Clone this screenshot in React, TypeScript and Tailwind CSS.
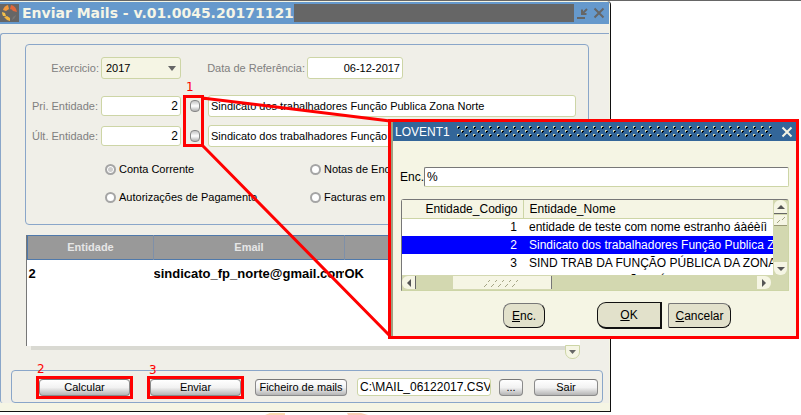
import React from 'react';

const font = { base: "font-['Liberation_Sans',Arial,sans-serif]" };

const lineInput = 'rounded-[3px] border border-[#cdd5a6] bg-white text-black outline-none min-w-0';
const glossy =
  'h-[17px] shrink-0 rounded-[4px] border border-[#8a8a8a] border-t-[#777] bg-linear-to-b from-white via-[#f2f2f2] to-[#b5b5b5] text-[11px] leading-[15px] text-black';
const marked = 'flex shrink-0 border-3 border-[#ff0000] bg-[#f0efe8]';
const lovButton = 'flex items-center justify-center bg-[#e2e1cb] text-xs leading-4 text-black border border-[#111]';

function Logo() {
  return (
    <svg className="h-[18px] w-[19px] shrink-0 bg-[#666]" viewBox="0 0 19 18" aria-hidden="true">
      <path d="M8 1 L9 5 L6 7 L3 6 Q4 2 8 1Z" fill="#f39a3e" />
      <path d="M11 1 Q16 2 17 8 L13 7 Q12 5 10 5Z" fill="#e2683c" />
      <path d="M2 8 L5 9 L6 12 L3 12 Q2 10 2 8Z" fill="#f4c04a" />
      <path d="M4 13 L7 12 L10 14 L10 17 Q6 16 4 13Z" fill="#f4b63e" />
      <path d="M13 13 L16 11 Q15 15 12 16Z" fill="#777" />
    </svg>
  );
}

function TitleBar() {
  return (
    <header className="flex h-[22px] items-center bg-[#6699cc]">
      <Logo />
      <h1 className="ml-[3px] shrink-0 whitespace-nowrap font-['DejaVu_Sans',Verdana,sans-serif] text-sm leading-[18px] font-bold text-[#f5f5e6]">
        Enviar Mails - v.01.0045.20171121
      </h1>
      <div className="h-[18px] flex-1 bg-[#666]" />
      <button type="button" aria-label="Minimizar" className="ml-[3px] h-4 w-3">
        <svg viewBox="0 0 12 16" className="h-4 w-3" fill="none" stroke="#666" strokeWidth="2">
          <path d="M10 4 L5 9 M5 4.500 V9 H9.500 M0 13 H8" />
        </svg>
      </button>
      <button type="button" aria-label="Fechar" className="mr-1 ml-1 h-4 w-3">
        <svg viewBox="0 0 12 16" className="h-4 w-3" fill="none" stroke="#666" strokeWidth="2">
          <path d="M1.500 3.500 L10.500 12.500 M10.500 3.500 L1.500 12.500" />
        </svg>
      </button>
    </header>
  );
}

function Lamp({ label }: { label: string }) {
  return (
    <button
      type="button"
      aria-label={label}
      className="h-3 w-[10px] shrink-0 rounded-[4px] border border-[#888] bg-linear-to-b from-[#c4c4c4] via-white to-[#b0b0b0]"
    />
  );
}

function EntityRow({ id, label }: { id: string; label: string }) {
  return (
    <div className="flex h-[22px] items-center text-[#808080]">
      <label htmlFor={id} className="w-[75px] shrink-0 pr-[3px] text-right text-[11px] leading-4 whitespace-nowrap">
        {label}
      </label>
      <input id={id} defaultValue="2" className={`${lineInput} h-5 w-20 shrink-0 pr-[2px] text-right text-xs`} />
      <div className="flex w-[27px] shrink-0 justify-center">
        <Lamp label={`Procurar ${label}`} />
      </div>
      <input
        aria-label={`Nome ${label}`}
        defaultValue="Sindicato dos trabalhadores Função Publica Zona Norte"
        className={`${lineInput} h-[22px] flex-1 px-[2px] text-[11px]`}
      />
    </div>
  );
}

function Radio({ label, checked = false }: { label: string; checked?: boolean }) {
  return (
    <label className="flex items-center gap-[3px] text-[11px] leading-4 whitespace-nowrap text-black">
      <input
        type="radio"
        name="tipo"
        defaultChecked={checked}
        className="size-[11px] shrink-0 appearance-none rounded-full border-2 border-[#a5a5a5] bg-white checked:bg-[#cdcdcd] checked:shadow-[inset_0_0_0_1px_white]"
      />
      {label}
    </label>
  );
}

function Filters() {
  return (
    <section className="mr-[20px] ml-6 h-[181px] rounded-[4px] border border-[#8aa6c9] pt-3 pr-3">
      <div className="flex h-[22px] items-center text-[11px] leading-4 text-[#808080]">
        <label htmlFor="ano" className="w-[75px] shrink-0 pr-[2px] text-right">
          Exercicio:
        </label>
        <div className="relative h-[22px] w-20 shrink-0">
          <select
            id="ano"
            className="h-[22px] w-20 appearance-none rounded-[3px] border border-[#cdd5a6] bg-[#f5f5e4] pl-1 text-[11px] text-black outline-none"
          >
            <option>2017</option>
          </select>
          <svg className="pointer-events-none absolute top-[9px] right-[5px] h-[5px] w-2" viewBox="0 0 8 5">
            <path d="M0 0 H8 L4 5Z" fill="#666" />
          </svg>
        </div>
        <label htmlFor="data" className="w-[126px] shrink-0 pr-[2px] text-right whitespace-nowrap">
          Data de Referência:
        </label>
        <input id="data" defaultValue="06-12-2017" className={`${lineInput} h-[22px] w-24 pr-[2px] text-right text-[11px]`} />
      </div>
      <div className="mt-4 flex flex-col gap-2">
        <EntityRow id="pri" label="Pri. Entidade:" />
        <EntityRow id="ult" label="Últ. Entidade:" />
      </div>
      <div className="mt-[14px] ml-[79px] grid grid-cols-[205px_auto] justify-start gap-y-3">
        <Radio label="Conta Corrente" checked />
        <Radio label="Notas de Encomenda" />
        <Radio label="Autorizações de Pagamento" />
        <Radio label="Facturas em Conta" />
      </div>
    </section>
  );
}

function Results() {
  return (
    <section className="mt-[10px] mr-[29px] ml-[25px]">
      <div className="h-[111px] border-l border-[#777] bg-white">
        <table className="w-full table-fixed border-collapse font-bold">
          <thead>
            <tr className="h-6 border border-[#4f79ab] bg-[#999] text-[11px] text-[#e6e6e6]">
              <th className="w-[126px] border-r border-[#7f90a8]">Entidade</th>
              <th className="w-[191px] border-r border-[#7f90a8]">Email</th>
              <th className="border-b-0">Estado</th>
            </tr>
          </thead>
          <tbody>
            <tr className="h-7 text-[13px] leading-4 text-black">
              <td className="pl-px">2</td>
              <td className="pr-px">
                <div className="overflow-hidden whitespace-nowrap">sindicato_fp_norte@gmail.com</div>
              </td>
              <td>OK</td>
            </tr>
          </tbody>
        </table>
      </div>
      <div className="flex h-[14px] items-start pl-[5px]">
        <div className="h-1 flex-1 bg-[#d9d9d2]" />
        <button
          type="button"
          aria-label="Descer"
          className="-mt-px flex h-[14px] w-[15px] items-center justify-center rounded-b-[7px] border border-[#cdd5a6] bg-[#f5f5e4]"
        >
          <svg className="h-1 w-[7px]" viewBox="0 0 7 4">
            <path d="M0 0 H7 L3.500 4Z" fill="#666" />
          </svg>
        </button>
      </div>
    </section>
  );
}

function Actions() {
  return (
    <footer className="mt-[10px] mr-[6px] mb-[7px] ml-[10px] flex h-[33px] items-center rounded-[4px] border border-[#8aa6c9] pr-1 pb-[4px] pl-6">
      <div className={`${marked} relative mt-[5px]`}>
        <span className="absolute -top-[18px] -left-[2px] font-['DejaVu_Sans',Tahoma,sans-serif] text-xs leading-4 text-[#ff0000]">
          2
        </span>
        <button type="button" className={`${glossy} w-[91px]`}>
          Calcular
        </button>
      </div>
      <div className={`${marked} mt-[5px] ml-[14px]`}>
        <button type="button" className={`${glossy} w-[91px]`}>
          Enviar
        </button>
      </div>
      <button type="button" className={`${glossy} mt-[5px] ml-[11px] w-[92px] whitespace-nowrap`}>
        Ficheiro de mails
      </button>
      <input
        aria-label="Ficheiro"
        defaultValue="C:\MAIL_06122017.CSV"
        className={`${lineInput} mt-[5px] ml-[10px] h-[18px] flex-1 pl-[2px] text-xs`}
      />
      <button type="button" aria-label="Procurar ficheiro" className={`${glossy} mt-[5px] ml-2 w-6`}>
        ...
      </button>
      <button type="button" className={`${glossy} mt-[5px] ml-[11px] w-16`}>
        Sair
      </button>
    </footer>
  );
}

function Thumb({ d, label, className }: { d: string; label: string; className: string }) {
  return (
    <button type="button" aria-label={label} className={`flex shrink-0 items-center justify-center bg-[#f5f5e4] ${className}`}>
      <svg className="size-2" viewBox="0 0 8 8">
        <path d={d} fill="#555" />
      </svg>
    </button>
  );
}

const entities = [
  ['1', 'entidade de teste com nome estranho áàéèíì'],
  ['2', 'Sindicato dos trabalhadores Função Publica Zona Norte'],
  ['3', 'SIND TRAB DA FUNÇÃO PÚBLICA DA ZONA SUL'],
  ['4', 'SIND TRAB FUNÇÃO PÚBLICA'],
];

function Lov() {
  return (
    <div
      role="dialog"
      aria-label="LOVENT1"
      className="absolute top-[118px] right-[2px] left-[388px] z-10 border-3 border-[#ff0000] bg-[#f5f5e4] text-xs leading-4 text-black"
    >
      <div className="border-l-2 border-[#a0a080] pb-[7px]">
        <header className="flex h-[19px] items-center bg-[#336699] pr-[3px] pl-[2px] text-white">
          <h2 className="w-[62px] shrink-0">LOVENT1</h2>
          <svg className="h-[11px] min-w-0 flex-1" aria-hidden="true">
            <defs>
              <pattern id="grip" width="8" height="8" patternUnits="userSpaceOnUse">
                <path d="M1 1h2v1H2v1H1z M5 5h2v1H6v1H5z" fill="#000" />
                <path d="M0 0h2v1H1v1H0z M4 4h2v1H5v1H4z" fill="#d3d8b0" />
              </pattern>
            </defs>
            <rect width="100%" height="11" fill="url(#grip)" />
          </svg>
          <button type="button" aria-label="Fechar" className="ml-2 size-3">
            <svg className="size-3" viewBox="0 0 12 12" stroke="#f5f5e4" strokeWidth="2">
              <path d="M1.500 1.500 L10.500 10.500 M10.500 1.500 L1.500 10.500" />
            </svg>
          </button>
        </header>
        <div className="mt-[26px] mr-[7px] ml-[7px] flex items-center">
          <label htmlFor="enc" className="w-6 shrink-0">
            Enc.
          </label>
          <input
            id="enc"
            defaultValue="%"
            className="h-5 min-w-0 flex-1 rounded-[2px] border border-[#cdd5a6] border-t-[#777] border-l-[#777] bg-white pl-[2px] outline-none"
          />
        </div>
        <div className="mt-3 mr-[7px] ml-2 rounded-t-[3px] border border-[#cdd5a6] border-t-[#777] border-l-[#777] bg-[#d3d8b0]">
          <div className="flex h-[75px] overflow-hidden">
            <div className="min-w-0 flex-1 bg-white">
              <table className="w-full table-fixed border-collapse">
                <thead>
                  <tr className="h-[18px] bg-[#f5f5e4]">
                    <th className="w-[121px] border-r border-b border-[#cdd5a6] pr-[5px] text-right font-normal">Entidade_Codigo</th>
                    <th className="border-b border-[#cdd5a6] pl-[6px] text-left font-normal">Entidade_Nome</th>
                  </tr>
                </thead>
                <tbody>
                  {entities.map(([code, name]) => (
                    <tr key={code} className={code === '2' ? 'h-[18px] bg-[#0000ff] text-white' : 'h-[18px]'}>
                      <td className="pr-[6px] text-right">{code}</td>
                      <td className="overflow-hidden pl-[6px] whitespace-nowrap">{name}</td>
                    </tr>
                  ))}
                </tbody>
              </table>
            </div>
            <div className="flex w-[15px] flex-col pl-px">
              <Thumb label="Subir" d="M4 2 L8 6 H0Z" className="h-[14px] w-[13px] rounded-t-[6px] border-b border-[#666]" />
              <div className="mt-px flex-1">
                <svg className="h-[11px] w-[13px] border-b border-[#999977] bg-[#f5f5e4]" viewBox="0 0 13 10" stroke="#a5a585">
                  <path d="M3 8l3-3M8 5l3-3" />
                </svg>
              </div>
              <Thumb label="Descer" d="M0 2 H8 L4 6Z" className="h-[13px] w-[13px] rounded-b-[6px]" />
            </div>
          </div>
          <div className="flex h-[15px] items-center pr-[17px]">
            <Thumb label="Esquerda" d="M6 0 V8 L2 4Z" className="h-[13px] w-[14px] rounded-l-[6px] border-r border-[#666]" />
            <div className="ml-[37px] flex h-[13px] w-[99px] items-center justify-center border-r border-[#777] bg-[#f5f5e4]">
              <svg className="h-2 w-9" viewBox="0 0 36 8" stroke="#a5a585">
                <path d="M4 3l2-2M11 3l2-2M18 3l2-2M25 3l2-2M32 3l2-2M0 8l3-3M7 8l3-3M14 8l3-3M21 8l3-3M28 8l3-3" />
              </svg>
            </div>
            <div className="flex-1" />
            <Thumb label="Direita" d="M2 0 V8 L6 4Z" className="h-[13px] w-[14px] rounded-r-[6px]" />
          </div>
        </div>
        <div className="mt-[11px] flex items-center pl-[110px]">
          <button type="button" className={`${lovButton} h-[25px] w-[42px] rounded-[8px] border-t-[#777] border-l-[#777]`}>
            <u>E</u>nc.
          </button>
          <button type="button" className={`${lovButton} ml-[52px] h-[27px] w-[65px] rounded-l-[9px] border-r-2 border-b-2`}>
            <u>O</u>K
          </button>
          <button
            type="button"
            className={`${lovButton} ml-[6px] h-[25px] w-[63px] rounded-r-[8px] rounded-l-[2px] border-t-[#777] border-l-[#777]`}
          >
            <u>C</u>ancelar
          </button>
        </div>
      </div>
    </div>
  );
}

function Callouts() {
  return (
    <div className="pointer-events-none absolute top-0 left-0 z-10 text-xs leading-4 text-[#ff0000] font-['DejaVu_Sans',Tahoma,sans-serif]">
      <svg className="h-[340px] w-[392px]" viewBox="0 0 392 340" fill="none" stroke="#ff0000" strokeWidth="3">
        <path d="M184.500 95.500 H202.500 V144.500 H184.500Z M202 97 L390 120 M202 144 L390 335" />
      </svg>
      <span className="absolute top-[78px] left-[186px]">1</span>
      <span className="absolute top-[361px] left-[149px]">3</span>
    </div>
  );
}

export default function App() {
  return (
    <main className={`relative border-t border-[#666] bg-white ${font.base}`}>
      <div className="mr-[190px] rounded-tr-[4px] border-r border-b border-[#111] bg-[#f5f5e4] pt-px pr-px pb-px">
        <TitleBar />
        <div className="bg-[#f0efe8] pt-[9px]">
          <div className="rounded-l-[3px] border-t border-l border-[#8aa6c9] pt-[10px]">
            <Filters />
            <Results />
            <Actions />
          </div>
        </div>
      </div>
      <svg className="mt-px ml-[264px] h-[2px] w-28" viewBox="0 0 112 2" aria-hidden="true">
        <path d="M1 2 L6 0 H21 V2Z" fill="#fbd9b0" />
        <path d="M83 0 H97 L104 2 H84Z" fill="#f9cdb4" />
      </svg>
      <Callouts />
      <Lov />
    </main>
  );
}
